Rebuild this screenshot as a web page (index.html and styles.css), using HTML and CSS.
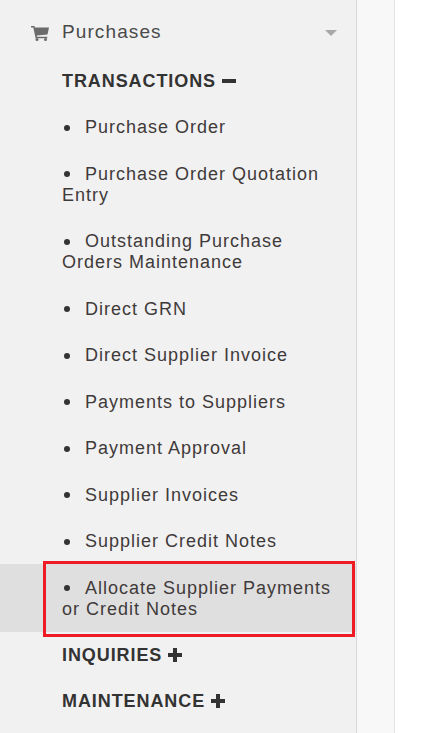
FILE: index.html
```html
<!DOCTYPE html>
<html lang="en">
<head>
<meta charset="utf-8">
<title>Purchases</title>
<link rel="stylesheet" href="styles.css">
</head>
<body>
<div class="page">
  <nav class="sidebar">
    <div class="menu-head">
      <svg class="cart" viewBox="0 0 18 16" width="18" height="16"><path d="M0 1h3.4l.5 1.4H18l-1.500 7.200-10.800 1 .3 1.100h10.300v1.500H4.600L2.300 2.500H0z" fill="#6b6b6b"/><circle cx="6" cy="14.500" r="1.500" fill="#6b6b6b"/><circle cx="14.500" cy="14.500" r="1.500" fill="#6b6b6b"/></svg>
      <span class="menu-title">Purchases</span>
      <span class="caret"></span>
    </div>
    <div class="group-title">TRANSACTIONS <span class="sign minus"></span></div>
    <ul class="items">
      <li class="item"><span class="dot"></span>Purchase Order</li>
      <li class="item"><span class="dot"></span>Purchase Order Quotation Entry</li>
      <li class="item"><span class="dot"></span>Outstanding Purchase Orders Maintenance</li>
      <li class="item"><span class="dot"></span>Direct GRN</li>
      <li class="item"><span class="dot"></span>Direct Supplier Invoice</li>
      <li class="item"><span class="dot"></span>Payments to Suppliers</li>
      <li class="item"><span class="dot"></span>Payment Approval</li>
      <li class="item"><span class="dot"></span>Supplier Invoices</li>
      <li class="item"><span class="dot"></span>Supplier Credit Notes</li>
      <li class="item active"><span class="dot"></span>Allocate Supplier Payments or Credit Notes<span class="callout"></span></li>
    </ul>
    <div class="group-title after">INQUIRIES <span class="sign plus"></span></div>
    <div class="group-title">MAINTENANCE <span class="sign plus"></span></div>
  </nav>
  <div class="gutter"></div>
</div>
</body>
</html>
```
FILE: styles.css
```css
* { box-sizing: border-box; }
html, body { margin: 0; height: 100%; background: #fff; }
body { overflow: hidden; font-family: "Liberation Sans", Arial, sans-serif; }
.page { display: flex; height: 733px; }
.sidebar {
  width: 357px;
  flex: none;
  background: #f1f1f1;
  border-right: 1px solid #d8d8d8;
  padding-top: 21px;
}
.gutter {
  width: 38px;
  flex: none;
  background: #f8f8f8;
  border-right: 1px solid #e4e4e4;
}
.menu-head {
  display: flex;
  align-items: center;
  height: 21px;
  padding-left: 31px;
  position: relative;
}
.cart { flex: none; margin-right: 13px; margin-top: 2px; }
.menu-title { font-size: 19px; letter-spacing: 1.1px; color: #4a4a4a; }
.caret {
  margin-left: auto;
  margin-right: 19px;
  margin-top: 2px;
  width: 0;
  height: 0;
  border-left: 6px solid transparent;
  border-right: 6px solid transparent;
  border-top: 6px solid #a8a8a8;
}
.group-title {
  margin-top: 29px;
  padding-left: 62px;
  font-size: 18px;
  line-height: 21px;
  font-weight: 700;
  letter-spacing: 0.92px;
  color: #333;
  display: flex;
  align-items: center;
  gap: 6px;
}
.group-title.after { margin-top: 13.5px; }
.group-title + .group-title { margin-top: 25px; }
.sign { position: relative; display: inline-block; width: 14px; height: 14px; margin-bottom: 2px; }
.sign::before {
  content: "";
  position: absolute;
  left: 0;
  right: 0;
  top: 5px;
  height: 4px;
  background: #333;
}
.plus::after {
  content: "";
  position: absolute;
  top: 0;
  bottom: 0;
  left: 5px;
  width: 4px;
  background: #333;
}
.items { list-style: none; margin: 11.5px 0 0; padding: 0; }
.item {
  padding: 13.5px 20px 12px 62px;
  font-size: 18px;
  line-height: 21px;
  letter-spacing: 1px;
  color: #3f3a3a;
  position: relative;
}
.dot {
  display: inline-block;
  width: 6px;
  height: 6px;
  border-radius: 50%;
  background: #333;
  margin: 0 15px 1px 2px;
  vertical-align: middle;
}
.active { background: #dfdfdf; }
.callout {
  position: absolute;
  left: 43px;
  right: 1px;
  top: -3px;
  bottom: -5px;
  border: 3px solid #ed1c24;
}
```
